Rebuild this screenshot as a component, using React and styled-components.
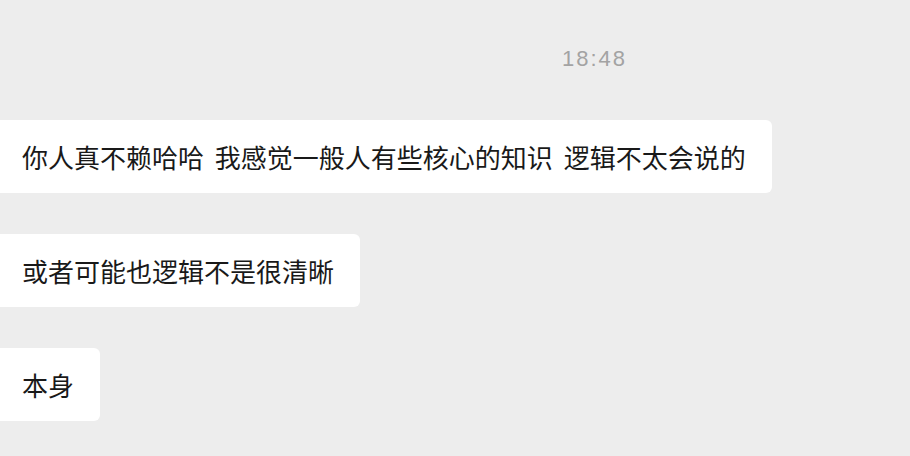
import React from "react";
import styled, { createGlobalStyle } from "styled-components";

const Global = createGlobalStyle`
  html, body { margin: 0; padding: 0; background: #ededed; }
  body { width: 910px; height: 456px; overflow: hidden; }
`;

const Chat = styled.div`
  display: flex;
  flex-direction: column;
  align-items: flex-start;
  gap: 41px;
  padding-top: 120px;
  position: relative;
  font-family: "Noto Sans CJK SC", "Noto Sans", sans-serif;
`;

const Time = styled.div`
  position: absolute;
  top: 46px;
  left: 562px;
  font-family: "Liberation Sans", Arial, sans-serif;
  font-size: 22px;
  letter-spacing: 2px;
  color: #a3a3a3;
  line-height: 26px;
`;

const Bubble = styled.div`
  background: #ffffff;
  border-radius: 0 6px 6px 0;
  padding: 18px 26px 18px 22px;
  font-size: 26px;
  line-height: 37px;
  word-spacing: 5px;
  color: #191919;
  white-space: nowrap;
`;

const messages = [
  "你人真不赖哈哈 我感觉一般人有些核心的知识 逻辑不太会说的",
  "或者可能也逻辑不是很清晰",
  "本身",
];

export default function App() {
  return (
    <>
      <Global />
      <Chat>
        <Time>18:48</Time>
        {messages.map((m) => (
          <Bubble key={m}>{m}</Bubble>
        ))}
      </Chat>
    </>
  );
}
